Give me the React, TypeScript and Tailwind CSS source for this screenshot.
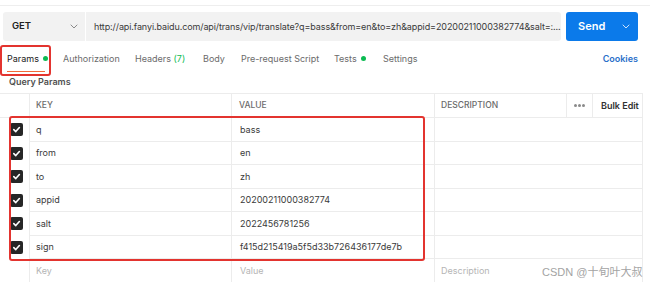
import React from 'react';

const rows = [
  { key: 'q', value: 'bass' },
  { key: 'from', value: 'en' },
  { key: 'to', value: 'zh' },
  { key: 'appid', value: '20200211000382774' },
  { key: 'salt', value: '2022456781256' },
  { key: 'sign', value: 'f415d215419a5f5d33b726436177de7b' },
];

function Check() {
  return (
    <span className="flex h-[13px] w-[13px] items-center justify-center rounded-[2px] bg-[#262626]">
      <svg width="9" height="9" viewBox="0 0 10 10" fill="none">
        <path d="M2 5.2 L4.2 7.3 L8.2 2.8" stroke="white" strokeWidth="1.8" strokeLinecap="round" strokeLinejoin="round" />
      </svg>
    </span>
  );
}

function Chevron({ color }: { color: string }) {
  return (
    <svg width="8" height="5" viewBox="0 0 8 5" fill="none">
      <path d="M1 1 L4 4 L7 1" stroke={color} strokeWidth="1" strokeLinecap="round" strokeLinejoin="round" />
    </svg>
  );
}

function Dot() {
  return <span className="h-[5px] w-[5px] rounded-full bg-[#0cbb52]" />;
}

export default function App() {
  return (
    <div className="relative h-[282px] w-[650px] overflow-hidden bg-white text-[9px] text-[#3a3a3a]" style={{ fontFamily: 'Inter, "Noto Sans", sans-serif' }}>
      {/* top strip */}
      <div className="h-[6px] border-b border-[#eeeeee]" />

      {/* request bar */}
      <div className="mt-[6px] flex h-[29px] pl-[3px]">
        <div className="flex w-[82px] items-center justify-between rounded-l-[3px] bg-[#f2f2f2] pl-[9px] pr-[7px]">
          <span className="text-[9.5px] font-semibold text-[#212121]">GET</span>
          <Chevron color="#8a8a8a" />
        </div>
        <div className="ml-[1px] flex w-[475px] items-center overflow-hidden rounded-r-[3px] bg-[#f2f2f2] pl-[8px] pr-[4px] text-[#3a3a3a]">
          <span className="whitespace-nowrap tracking-[-0.1px]">http://api.fanyi.baidu.com/api/trans/vip/translate?q=bass&amp;from=en&amp;to=zh&amp;appid=20200211000382774&amp;salt=:...</span>
        </div>
        <div className="ml-[5px] flex w-[72px] items-center rounded-[3px] bg-[#0b7aea] text-white">
          <span className="pl-[12px] text-[11px] font-semibold">Send</span>
          <span className="ml-auto mr-[8px] flex items-center">
            <Chevron color="#cfe3fb" />
          </span>
        </div>
      </div>

      {/* tabs */}
      <div className="mt-[11px] flex h-[22px] items-start pl-[7px] text-[#6b6b6b]">
        <div className="flex w-[56px] flex-col">
          <span className="flex items-center gap-[4px] text-[#212121]">
            Params <Dot />
          </span>
          <span className="mt-[5px] h-[1.5px] w-[38px] bg-[#f26b3a]" />
        </div>
        <span className="w-[72px]">Authorization</span>
        <span className="w-[68px]">
          Headers <span className="text-[#0cbb52]">(7)</span>
        </span>
        <span className="w-[38px]">Body</span>
        <span className="w-[93px]">Pre-request Script</span>
        <span className="flex w-[49px] items-center gap-[4px]">
          Tests <Dot />
        </span>
        <span>Settings</span>
        <span className="ml-auto mr-[12px] font-semibold text-[#2a6fc9]">Cookies</span>
      </div>

      <div className="mt-[1px] h-[14px] pl-[9px] font-semibold text-[#505050]">Query Params</div>

      {/* table */}
      <div className="mt-[4px] w-[643px] border-r border-t border-[#ececec]">
        <div className="flex h-[24px] border-b border-[#ececec] text-[8.5px] font-medium text-[#6b6b6b]">
          <div className="w-[30px] border-r border-[#ececec]" />
          <div className="flex w-[202px] items-center border-r border-[#ececec] pl-[6px]">KEY</div>
          <div className="flex w-[203px] items-center border-r border-[#ececec] pl-[7px]">VALUE</div>
          <div className="flex w-[132px] items-center border-r border-[#ececec] pl-[6px]">DESCRIPTION</div>
          <div className="flex w-[26px] items-center justify-center gap-[1.5px] border-r border-[#ececec]">
            <span className="h-[2.5px] w-[2.5px] rounded-full bg-[#8a8a8a]" />
            <span className="h-[2.5px] w-[2.5px] rounded-full bg-[#8a8a8a]" />
            <span className="h-[2.5px] w-[2.5px] rounded-full bg-[#8a8a8a]" />
          </div>
          <div className="flex flex-1 items-center pl-[8px] text-[9px] font-semibold text-[#303030]">Bulk Edit</div>
        </div>
        {rows.map((r) => (
          <div key={r.key} className="flex h-[23.5px]">
            <div className="flex w-[30px] items-center justify-center border-r border-[#ececec] pl-[3px]">
              <Check />
            </div>
            <div className="flex w-[202px] items-center border-b border-r border-[#ececec] pl-[6px]">{r.key}</div>
            <div className="flex w-[203px] items-center border-b border-r border-[#ececec] pl-[8px]">{r.value}</div>
            <div className="flex-1 border-b border-[#ececec]" />
          </div>
        ))}
        <div className="flex h-[24px] text-[#b5b5b5]">
          <div className="w-[30px] border-r border-[#ececec]" />
          <div className="flex w-[202px] items-center border-r border-[#ececec] pl-[6px]">Key</div>
          <div className="flex w-[203px] items-center border-r border-[#ececec] pl-[8px]">Value</div>
          <div className="flex flex-1 items-center pl-[6px]">Description</div>
        </div>
      </div>

      {/* highlight boxes */}
      <div className="pointer-events-none absolute left-[0px] top-[45px] h-[31px] w-[51px] rounded-[3px] border-2 border-[#e3342f]" />
      <div className="pointer-events-none absolute left-[9px] top-[116px] h-[145px] w-[416px] rounded-[3px] border-2 border-[#e3342f]" />

      <div className="absolute left-[542px] top-[264px] text-[11px] text-[#a3a3a3]" style={{ fontFamily: '"Liberation Sans", "Noto Sans CJK SC", sans-serif' }}>
        CSDN @十旬叶大叔
      </div>
    </div>
  );
}
